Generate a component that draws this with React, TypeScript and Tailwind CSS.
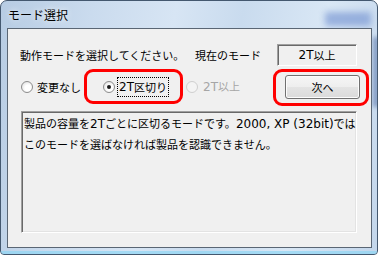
import React from 'react';

const Radio = ({ checked, disabled }: { checked?: boolean; disabled?: boolean }) => (
  <span
    className={`flex h-[12px] w-[12px] shrink-0 items-center justify-center rounded-full border ${
      disabled
        ? 'border-[#cfcfcf] bg-[#f4f4f4]'
        : 'border-[#8c8c8c] bg-[radial-gradient(circle_at_60%_60%,#ffffff_35%,#d6d6d6_100%)]'
    }`}
  >
    {checked && <span className="h-[4px] w-[4px] rounded-full bg-[#1a1a1a]" />}
  </span>
);

const Latin = ({ children }: { children: React.ReactNode }) => (
  <span className="font-['DejaVu_Sans',sans-serif] text-[12px]">{children}</span>
);

export default function App() {
  return (
    <div className="relative h-[255px] w-[378px] overflow-hidden rounded-t-[7px] rounded-b-[4px] border border-[#44586f] bg-[linear-gradient(100deg,#b7cce3_0%,#cadbee_22%,#d7e5f4_42%,#c9dbee_58%,#d9e7f5_78%,#c3d6eb_100%)] font-['Noto_Sans_CJK_JP',sans-serif] text-[11px] text-black">
      {/* glass bleed-through */}
      <div className="absolute right-[6px] top-[11px] h-[14px] w-[46px] bg-[#6f8fd0] opacity-60 blur-[3px]" />
      <div className="absolute right-[-2px] top-[36px] h-[70px] w-[6px] bg-[#3c5c98] opacity-50 blur-[2px]" />
      <div className="absolute bottom-0 left-0 right-0 h-[3px] bg-[#8fd6f3] opacity-70" />

      <div className="flex h-[27px] items-center pl-[7px] text-[12px] [text-shadow:0_0_6px_#ffffff]">
        モード選択
      </div>

      <div className="relative ml-[6px] h-[220px] w-[365px] border border-[#5a6674] bg-[#f0f0f0]">
        <div className="mt-[15px] flex h-[22px] items-center pl-[12px]">
          <span className="w-[175px] whitespace-nowrap">動作モードを選択してください。</span>
          <span className="w-[82px] whitespace-nowrap">現在のモード</span>
          <div className="flex h-[22px] w-[80px] items-center justify-center border-t border-l border-[#a0a0a0] border-r border-b border-r-[#ffffff] border-b-[#ffffff] shadow-[inset_1px_1px_0_#696969]">
            <Latin>2T</Latin>以上
          </div>
        </div>

        <div className="mt-[9px] flex h-[24px] items-center pl-[13px]">
          <div className="flex w-[82px] items-center gap-[4px]">
            <Radio />
            <span>変更なし</span>
          </div>
          <div className="flex w-[83px] items-center gap-[3px]">
            <Radio checked />
            <span className="flex h-[18px] items-center px-[1px] outline-1 outline-dotted outline-[#000000]">
              <Latin>2T</Latin>区切り
            </span>
          </div>
          <div className="flex items-center gap-[5px] text-[#a6a6a6]">
            <Radio disabled />
            <span>
              <Latin>2T</Latin>以上
            </span>
          </div>
          <button className="ml-auto mr-[11px] flex h-[24px] w-[75px] items-center justify-center rounded-[3px] border border-[#707070] bg-[linear-gradient(#f6f6f6_0%,#eeeeee_50%,#e4e4e4_50%,#dadada_100%)] shadow-[inset_0_0_0_1px_#fcfcfc]">
            次へ
          </button>
        </div>

        <div className="ml-[13px] mt-[12px] h-[122px] w-[336px] border-t border-l border-[#a0a0a0] border-r border-b border-r-[#ffffff] border-b-[#ffffff] px-[2px] pt-[1px] leading-[20px] shadow-[inset_1px_1px_0_#696969,inset_-1px_-1px_0_#e3e3e3]">
          <div className="whitespace-nowrap">
            製品の容量を<Latin>2T</Latin>ごとに区切るモードです。<Latin>2000, XP (32bit)</Latin>では
          </div>
          <div className="whitespace-nowrap">このモードを選ばなければ製品を認識できません。</div>
        </div>
      </div>

      {/* red highlight rings */}
      <div className="absolute left-[83px] top-[68px] h-[35px] w-[99px] rounded-[9px] border-[3px] border-[#ff0000]" />
      <div className="absolute left-[272px] top-[68px] h-[37px] w-[96px] rounded-[9px] border-[3px] border-[#ff0000]" />
    </div>
  );
}
